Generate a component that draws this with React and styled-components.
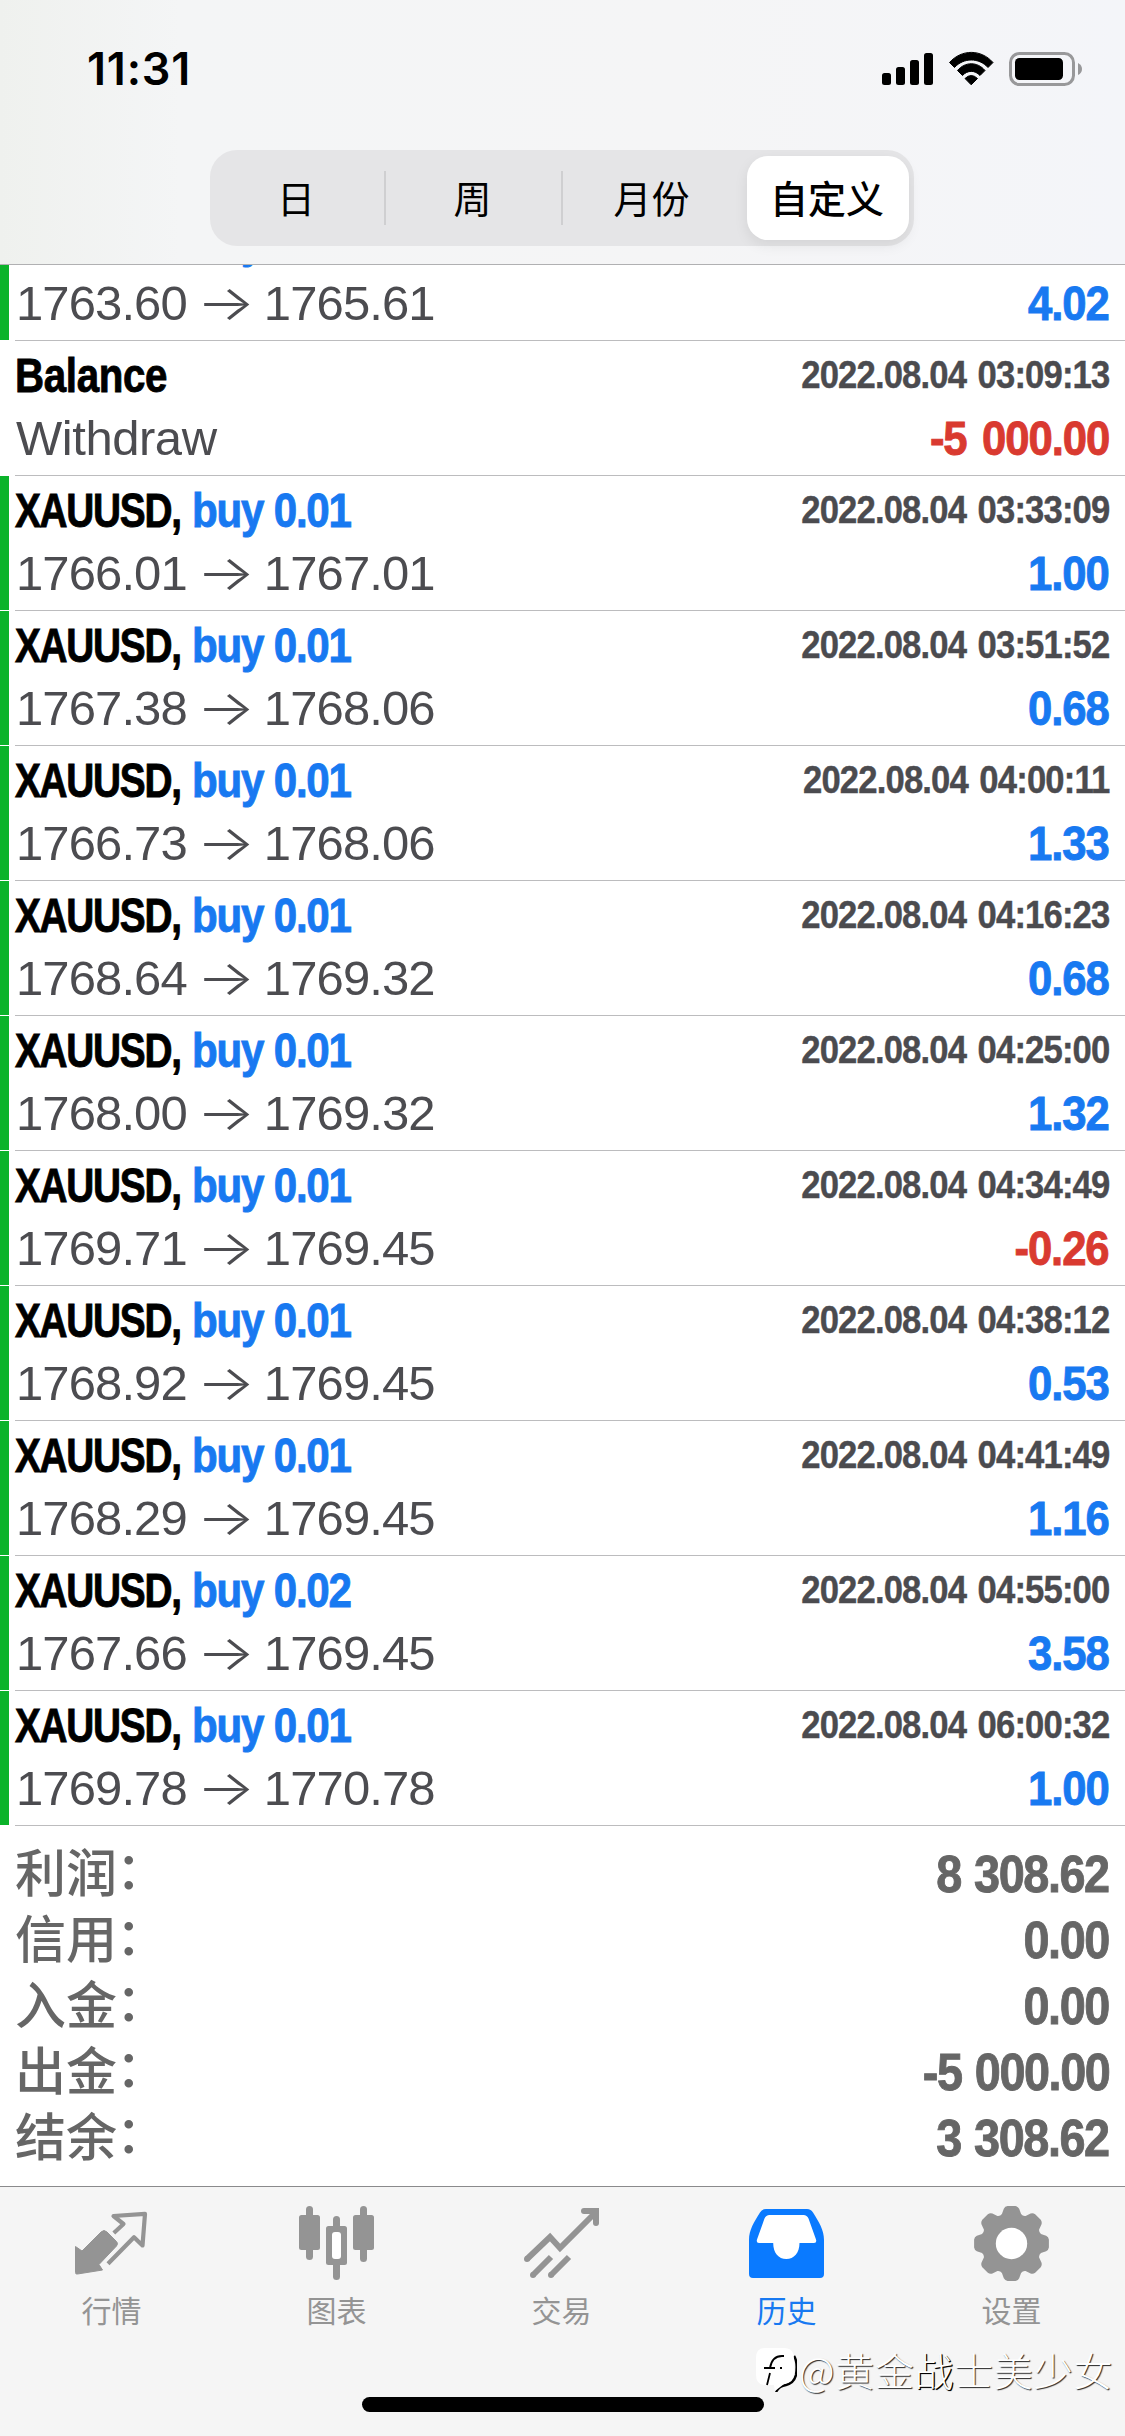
import React from 'react';
import styled, { createGlobalStyle } from 'styled-components';

const GlobalStyle = createGlobalStyle`
    * {
        box-sizing: border-box;
    }

    body {
        margin: 0;
        background: #fff;
        font-family: "Liberation Sans", "Noto Sans CJK SC", sans-serif;
    }
`;

// Styled Components
const Screen = styled.div`
    position: relative;
    display: flex;
    flex-direction: column;
    width: 1125px;
    height: 2436px;
    overflow: hidden;
    background: #fff;
`;

const Header = styled.header`
    position: relative;
    z-index: 1;
    flex: none;
    height: 265px;
    background: linear-gradient(90deg, #eff1ee 0, #f4f5f6 16%, #f5f5f6 60%, #f4f5f9 100%);
    border-bottom: 1px solid #b0b0b2;
`;

const StatusBar = styled.div`
    display: flex;
    align-items: center;
    justify-content: space-between;
    height: 138px;
    padding: 0 43px 0 87px;
`;

const Clock = styled.span`
    font-family: Inter, sans-serif;
    font-size: 45px;
    font-weight: 600;
    line-height: 138px;
    letter-spacing: 0.8px;
    color: #000;
`;

const Segments = styled.nav`
    display: grid;
    grid-template-columns: 176px 177px 184px 162px;
    width: 704px;
    height: 96px;
    margin: 12px 0 0 210px;
    padding: 6px 0;
    border-radius: 27px;
    background: #e5e5e7;
`;

const Segment = styled.button`
    display: flex;
    align-items: center;
    justify-content: center;
    height: 84px;
    padding: 0 2px 2px 0;
    border: none;
    border-radius: 21px;
    background: ${({ $active }) => ($active ? '#fff' : 'transparent')};
    box-shadow: ${({ $active }) => ($active ? '0 5px 14px rgba(0, 0, 0, 0.08)' : 'none')};
    font-family: "Noto Sans CJK SC", sans-serif;
    font-size: 38px;
    font-weight: ${({ $active }) => ($active ? 500 : 400)};
    line-height: 1;
    color: #000;
`;

const SegmentCell = styled.div`
    display: grid;
    grid-template-columns: 1fr auto;
    align-items: center;
`;

const SegmentLine = styled.i`
    width: ${({ $hidden }) => ($hidden ? 5 : 2)}px;
    height: 54px;
    background: ${({ $hidden }) => ($hidden ? 'transparent' : '#cfcfd1')};
`;

const DealList = styled.main`
    flex: none;
    margin-top: -59px;
`;

const DealRow = styled.section`
    display: grid;
    grid-template-columns: 9px 1fr;
    height: 134px;
`;

const SideBar = styled.i`
    background: ${({ $visible }) => ($visible ? '#0bb32a' : 'transparent')};
`;

const DealBody = styled.div`
    display: grid;
    grid-template-rows: 63px 64px;
    padding: 2px 16px 0 6px;
`;

const DealLine = styled.div`
    display: flex;
    justify-content: space-between;
    line-height: 64px;
    white-space: nowrap;
`;

const Divider = styled.hr`
    height: 1px;
    margin: 0 0 0 15px;
    border: none;
    background: #bcbcbe;
`;

// Bold text squeezed horizontally, in place of a real condensed face
const Condensed = styled.span`
    display: inline-block;
    font-weight: bold;
    white-space: nowrap;
    transform-origin: left;
    -webkit-text-stroke: 0.9px currentColor;
`;

const Title = styled.div`
    display: flex;
`;

const Symbol = styled(Condensed)`
    width: ${({ $balance }) => ($balance ? 160 : 177)}px;
    font-size: 48.5px;
    line-height: 65px;
    letter-spacing: ${({ $balance }) => ($balance ? -0.4 : -1.6)}px;
    color: #000;
    transform: scaleX(${({ $balance }) => ($balance ? 0.83 : 0.8)});
`;

const Side = styled(Condensed)`
    font-size: 48.5px;
    line-height: 65px;
    letter-spacing: -1.4px;
    color: #1879f1;
    transform: scaleX(0.868);
`;

const Time = styled(Condensed)`
    font-size: 38.5px;
    line-height: 63px;
    letter-spacing: -0.95px;
    word-spacing: 3px;
    color: #4b4b4f;
    transform: scaleX(0.9);
    transform-origin: right;
    -webkit-text-stroke-width: 0.4px;
`;

const Price = styled.span`
    display: flex;
    padding-left: 1px;
    font-size: 49px;
    letter-spacing: ${({ $text }) => ($text ? -0.45 : -0.9)}px;
    color: #4c4c50;
`;

const Arrow = styled.span`
    width: 77px;
    text-align: center;
    font-family: Inter, sans-serif;
    font-weight: 300;
    transform: scaleX(1.26);
`;

const Profit = styled(Condensed)`
    font-size: 48.5px;
    letter-spacing: -1.2px;
    word-spacing: 5px;
    color: ${({ $loss }) => ($loss ? '#d93a30' : '#1879f1')};
    transform: scaleX(0.9);
    transform-origin: right;
`;

const Summary = styled.section`
    flex: none;
    height: 360px;
    padding: 15px 16px 0 15px;
`;

const SummaryRow = styled.div`
    display: flex;
    justify-content: space-between;
    height: 66px;
    line-height: 66px;
    color: #666;
`;

const SummaryLabel = styled.span`
    margin-top: -4px;
    font-family: "Noto Sans CJK SC", sans-serif;
    font-size: 51px;
    font-weight: 500;
`;

const Colon = styled.span`
    position: relative;
    top: -3px;
    left: -1px;
`;

const SummaryValue = styled(Condensed)`
    font-size: 52px;
    letter-spacing: -1.6px;
    word-spacing: 2px;
    transform: scaleX(0.9);
    transform-origin: right;
`;

const TabBar = styled.footer`
    display: grid;
    grid-template-columns: repeat(5, 1fr);
    flex: none;
    height: 250px;
    padding-top: 18px;
    border-top: 1px solid #8a8a8c;
    background: #f5f5f5;
`;

const Tab = styled.a`
    display: flex;
    flex-direction: column;
    align-items: center;
    gap: 7px;
    color: ${({ $active }) => ($active ? '#1879f1' : '#949494')};

    svg {
        display: block;
        overflow: visible;
    }
`;

const TabLabel = styled.span`
    padding-right: 2px;
    font-family: "Noto Sans CJK SC", sans-serif;
    font-size: 30px;
    line-height: 44px;
`;

const HomeIndicator = styled.div`
    position: absolute;
    left: 362px;
    bottom: 24px;
    width: 402px;
    height: 15px;
    border-radius: 8px;
    background: #000;
`;

const Watermark = styled.div`
    position: absolute;
    left: 755px;
    top: 2346px;
    display: flex;
    align-items: center;
    gap: 2px;
    font-family: "Noto Sans CJK SC", sans-serif;
    font-size: 39px;
    font-weight: 300;
    line-height: 46px;
    letter-spacing: 0.7px;
    color: #fff;
    white-space: nowrap;
    text-shadow: 1px 1px 1px rgba(0, 0, 0, 0.85);

    b {
        font-weight: inherit;
        text-shadow: 1px 1px 0 #000, 1px 1px 1px #000;
    }
`;

const StatusIcons = () => (
    <svg width="200" height="36" viewBox="882 51 200 36">
        <rect x="882" y="73" width="9" height="12" rx="2.5" />
        <rect x="896" y="67" width="9" height="18" rx="2.5" />
        <rect x="910" y="60" width="9" height="25" rx="2.5" />
        <rect x="924" y="53" width="9" height="32" rx="2.5" />
        <path d="M949.5 62.5C961.5 49 981 49 993 62.5L988 67.5C979 57.5 963.5 57.5 954.5 67.5Z" stroke="#000" strokeWidth="1" strokeLinejoin="round" />
        <path d="M957.5 70.5C965 61.5 977.5 61.5 985 70.5L980 75.5C975 70 967.5 70 962.5 75.5Z" stroke="#000" strokeWidth="1" strokeLinejoin="round" />
        <path d="M965 78.5Q971.2 72.5 977.5 78.5L971.2 84.8Z" stroke="#000" strokeWidth="1" strokeLinejoin="round" />
        <rect x="1010.5" y="53.5" width="63" height="31" rx="9" fill="none" stroke="#98989a" strokeWidth="3" />
        <rect x="1015" y="58" width="48" height="22" rx="4.5" />
        <path d="M1078 63Q1082 65 1082 69T1078 75Z" fill="#98989a" />
    </svg>
);

const QuotesIcon = () => (
    <svg width="75" height="75">
        <path d="M0.5 41.5L7 46L26 27Q29 24 32 27L41.5 36.5Q43.5 38.5 41.5 41L24 59.5L27.5 65L2.5 69Q0.5 69.5 0.5 67.5Z" fill="#949494" stroke="#949494" strokeWidth="1" strokeLinejoin="round" />
        <path d="M38.8 28L48.5 19L38.5 11L70 8.8L67.5 40.5L59 32.2L33 58.8" fill="none" stroke="#949494" strokeWidth="4.2" strokeLinejoin="round" />
    </svg>
);

const ChartIcon = () => (
    <svg width="75" height="75" fill="#949494">
        <rect x="6" y="1" width="7" height="54" rx="3.5" />
        <rect x="-1" y="10" width="21" height="35" rx="2.5" />
        <rect x="60" y="1" width="7" height="56" rx="3.5" />
        <rect x="53" y="10" width="21" height="35" rx="2.5" />
        <rect x="33" y="11" width="7" height="64" rx="3.5" />
        <rect x="26" y="21" width="21" height="39" rx="2.5" />
        <rect x="32" y="27" width="9" height="27" rx="3" fill="#fff" />
    </svg>
);

const TradeIcon = () => (
    <svg width="75" height="75" fill="none" stroke="#949494" strokeWidth="6">
        <path d="M2 54L25 32L35 43L71 7" />
        <path d="M59 6H71V18" />
        <path d="M8 70L26 52M26 70L44 52" />
        <g fill="#949494" stroke="none">
            <circle cx="2" cy="54" r="3" />
            <circle cx="59" cy="6" r="3" />
            <circle cx="71" cy="18" r="3" />
            <circle cx="8" cy="70" r="3" />
            <circle cx="26" cy="70" r="3" />
        </g>
    </svg>
);

const HistoryIcon = () => (
    <svg width="75" height="75">
        <path d="M16 4H57Q61 4 63 7.5C69 17 74 25 74 35V69Q74 73 70 73H3Q-1 73 -1 69V35C-1 25 4 17 10 7.5Q12 4 16 4Z" fill="#0a7aff" />
        <path d="M19.5 10H53.5Q57 10 58.5 13.5L66 34.5Q67 38 64 38H49.5C49.5 48 44 54 36.3 54S23.2 48 23.2 38H9Q6 38 7 34.5L14.5 13.5Q16 10 19.5 10Z" fill="#fff" />
    </svg>
);

const polar = (radius, degrees) => {
    const angle = (degrees * Math.PI) / 180;
    return `${(36.5 + radius * Math.sin(angle)).toFixed(2)} ${(38.5 - radius * Math.cos(angle)).toFixed(2)}`;
};

// One tooth every 45 degrees, joined by shallow valleys
const gearPath = Array.from({ length: 8 }, (_, i) => {
    const a = i * 45;
    return `${i === 0 ? 'M' : 'L'}${polar(31, a - 18)}L${polar(35.5, a - 12.5)}Q${polar(37.6, a - 10)} ${polar(37.6, a - 6)}`
        + `L${polar(37.6, a + 6)}Q${polar(37.6, a + 10)} ${polar(35.5, a + 12.5)}L${polar(31, a + 18)}`
        + `Q${polar(29.5, a + 22.5)} ${polar(31, a + 27)}`;
}).join('') + 'Z';

const SettingsIcon = () => (
    <svg width="75" height="75">
        <path d={gearPath} fill="#949494" />
        <circle cx="36.5" cy="38.5" r="15.7" fill="#fff" />
    </svg>
);

const WatermarkLogo = () => (
    <svg width="42" height="46">
        <path d="M39 10Q43 16 41 29Q39 37 31 39Q24 40 21 46" fill="none" stroke="#000" strokeWidth="2.5" />
        <path d="M10 2H29Q39 2 39 13V28Q38 37 29 38L20 45L19 39H11Q1 39 1 29V12Q1 2 10 2Z" fill="#fff" />
        <path d="M9 22H15Q17 10 27 10H29M15 27L12 39M14 22H20M25 22H27" fill="none" stroke="#000" strokeWidth="1.8" />
    </svg>
);

const periods = ['日', '周', '月份', '自定义'];

const deals = [
    { side: 'buy 0.02', time: '2022.08.04 03:07:25', open: '1763.60', close: '1765.61', profit: '4.02' },
    { balance: true, time: '2022.08.04 03:09:13', profit: '-5 000.00' },
    { side: 'buy 0.01', time: '2022.08.04 03:33:09', open: '1766.01', close: '1767.01', profit: '1.00' },
    { side: 'buy 0.01', time: '2022.08.04 03:51:52', open: '1767.38', close: '1768.06', profit: '0.68' },
    { side: 'buy 0.01', time: '2022.08.04 04:00:11', open: '1766.73', close: '1768.06', profit: '1.33' },
    { side: 'buy 0.01', time: '2022.08.04 04:16:23', open: '1768.64', close: '1769.32', profit: '0.68' },
    { side: 'buy 0.01', time: '2022.08.04 04:25:00', open: '1768.00', close: '1769.32', profit: '1.32' },
    { side: 'buy 0.01', time: '2022.08.04 04:34:49', open: '1769.71', close: '1769.45', profit: '-0.26' },
    { side: 'buy 0.01', time: '2022.08.04 04:38:12', open: '1768.92', close: '1769.45', profit: '0.53' },
    { side: 'buy 0.01', time: '2022.08.04 04:41:49', open: '1768.29', close: '1769.45', profit: '1.16' },
    { side: 'buy 0.02', time: '2022.08.04 04:55:00', open: '1767.66', close: '1769.45', profit: '3.58' },
    { side: 'buy 0.01', time: '2022.08.04 06:00:32', open: '1769.78', close: '1770.78', profit: '1.00' },
];

const totals = [
    ['利润', '8 308.62'],
    ['信用', '0.00'],
    ['入金', '0.00'],
    ['出金', '-5 000.00'],
    ['结余', '3 308.62'],
];

const tabs = [
    { label: '行情', Icon: QuotesIcon },
    { label: '图表', Icon: ChartIcon },
    { label: '交易', Icon: TradeIcon },
    { label: '历史', Icon: HistoryIcon, active: true },
    { label: '设置', Icon: SettingsIcon },
];

const Deal = ({ deal }) => (
    <>
        <DealRow>
            <SideBar $visible={!deal.balance} />
            <DealBody>
                <DealLine>
                    <Title>
                        <Symbol $balance={deal.balance}>{deal.balance ? 'Balance' : 'XAUUSD,'}</Symbol>
                        {deal.side && <Side>{deal.side}</Side>}
                    </Title>
                    <Time>{deal.time}</Time>
                </DealLine>
                <DealLine>
                    {deal.balance ? (
                        <Price $text>Withdraw</Price>
                    ) : (
                        <Price>
                            {deal.open}
                            <Arrow>→</Arrow>
                            {deal.close}
                        </Price>
                    )}
                    <Profit $loss={deal.profit.startsWith('-')}>{deal.profit}</Profit>
                </DealLine>
            </DealBody>
        </DealRow>
        <Divider />
    </>
);

const App = () => {
    return (
        <>
            <GlobalStyle />
            <Screen>
                <Header>
                    <StatusBar>
                        <Clock>11:31</Clock>
                        <StatusIcons />
                    </StatusBar>
                    <Segments>
                        {periods.map((period, i) => (i === 3 ? (
                            <Segment key={period} $active>{period}</Segment>
                        ) : (
                            <SegmentCell key={period}>
                                <Segment>{period}</Segment>
                                <SegmentLine $hidden={i === 2} />
                            </SegmentCell>
                        )))}
                    </Segments>
                </Header>
                <DealList>
                    {deals.map((deal) => <Deal key={deal.time} deal={deal} />)}
                </DealList>
                <Summary>
                    {totals.map(([label, value]) => (
                        <SummaryRow key={label}>
                            <SummaryLabel>{label}<Colon>：</Colon></SummaryLabel>
                            <SummaryValue>{value}</SummaryValue>
                        </SummaryRow>
                    ))}
                </Summary>
                <TabBar>
                    {tabs.map(({ label, Icon, active }) => (
                        <Tab key={label} $active={active}>
                            <Icon />
                            <TabLabel>{label}</TabLabel>
                        </Tab>
                    ))}
                </TabBar>
                <HomeIndicator />
                <Watermark>
                    <WatermarkLogo />
                    <span>@黄金<b>战</b>士美少女</span>
                </Watermark>
            </Screen>
        </>
    );
};

export default App;
